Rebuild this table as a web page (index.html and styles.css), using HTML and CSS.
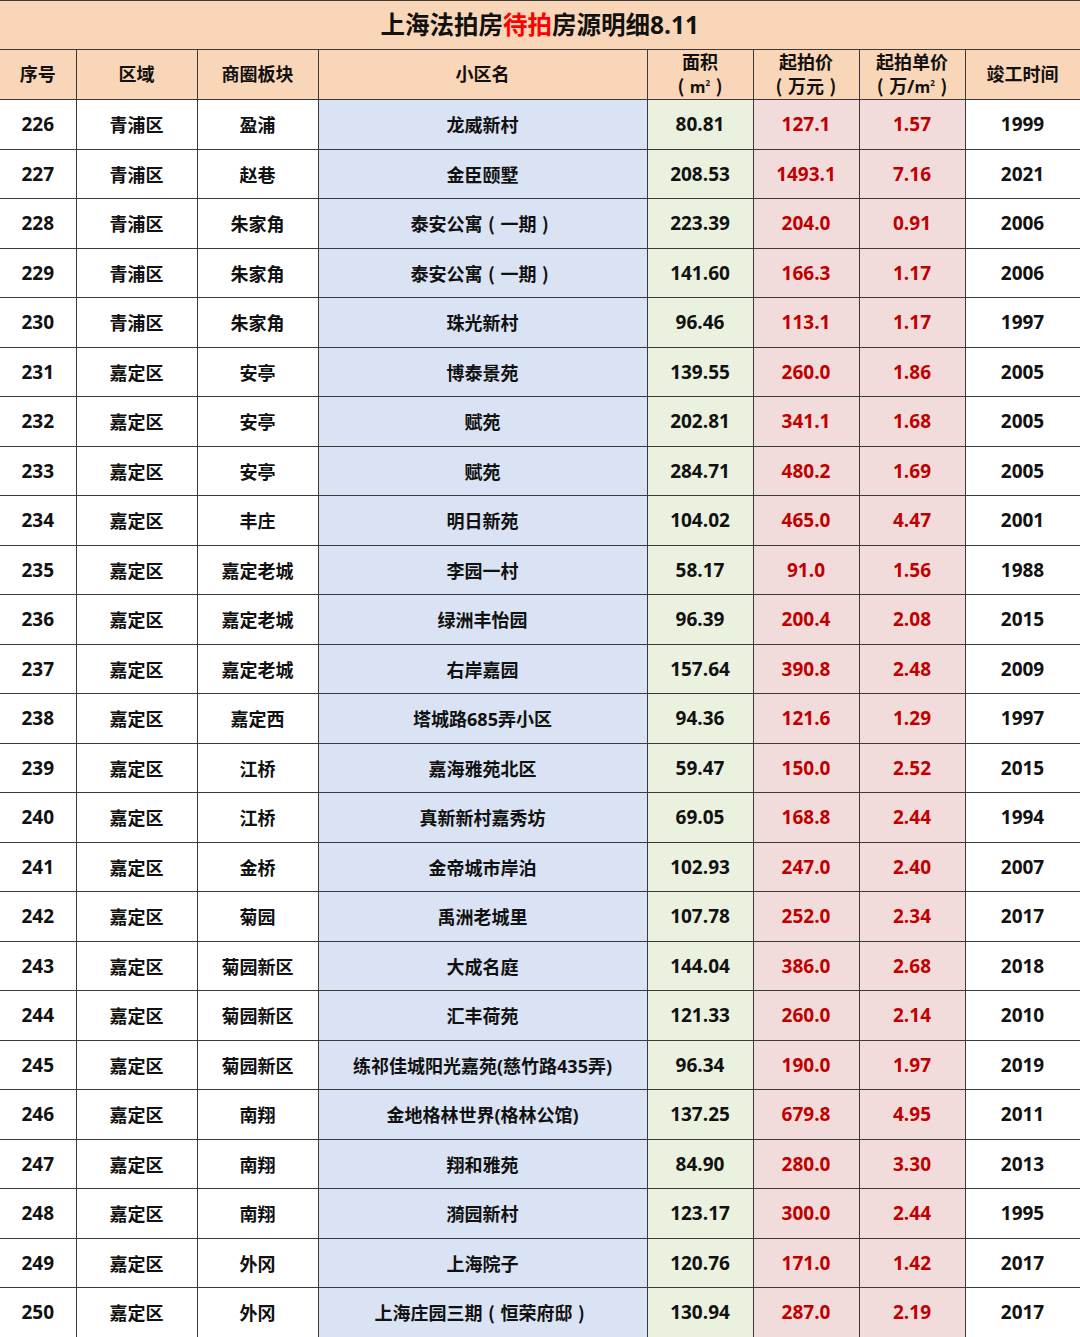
FILE: index.html
```html
<!DOCTYPE html>
<html lang="zh-CN">
<head>
<meta charset="utf-8">
<title>上海法拍房待拍房源明细8.11</title>
<link rel="stylesheet" href="styles.css">
</head>
<body>
<table class="sheet">
  <colgroup>
    <col class="c-no"><col class="c-area"><col class="c-zone"><col class="c-name"><col class="c-size"><col class="c-price"><col class="c-unit"><col class="c-year">
  </colgroup>
  <thead>
    <tr class="title-row"><th colspan="8" class="title">上海法拍房<span class="hot">待拍</span>房源明细8.11</th></tr>
    <tr class="head-row">
      <th>序号</th><th>区域</th><th>商圈板块</th><th>小区名</th>
      <th>面积<br><span class="p">(</span><span class="sq">m<sup>2</sup></span><span class="p">)</span></th>
      <th>起拍价<br><span class="p">(</span>万元<span class="p">)</span></th>
      <th>起拍单价<br><span class="p">(</span>万/<span class="sq">m<sup>2</sup></span><span class="p">)</span></th>
      <th>竣工时间</th>
    </tr>
  </thead>
  <tbody>
    <tr><td>226</td><td>青浦区</td><td>盈浦</td><td class="name">龙威新村</td><td class="size">80.81</td><td class="price">127.1</td><td class="price">1.57</td><td>1999</td></tr>
    <tr><td>227</td><td>青浦区</td><td>赵巷</td><td class="name">金臣颐墅</td><td class="size">208.53</td><td class="price">1493.1</td><td class="price">7.16</td><td>2021</td></tr>
    <tr><td>228</td><td>青浦区</td><td>朱家角</td><td class="name">泰安公寓<span class="p">(</span>一期<span class="p">)</span></td><td class="size">223.39</td><td class="price">204.0</td><td class="price">0.91</td><td>2006</td></tr>
    <tr><td>229</td><td>青浦区</td><td>朱家角</td><td class="name">泰安公寓<span class="p">(</span>一期<span class="p">)</span></td><td class="size">141.60</td><td class="price">166.3</td><td class="price">1.17</td><td>2006</td></tr>
    <tr><td>230</td><td>青浦区</td><td>朱家角</td><td class="name">珠光新村</td><td class="size">96.46</td><td class="price">113.1</td><td class="price">1.17</td><td>1997</td></tr>
    <tr><td>231</td><td>嘉定区</td><td>安亭</td><td class="name">博泰景苑</td><td class="size">139.55</td><td class="price">260.0</td><td class="price">1.86</td><td>2005</td></tr>
    <tr><td>232</td><td>嘉定区</td><td>安亭</td><td class="name">赋苑</td><td class="size">202.81</td><td class="price">341.1</td><td class="price">1.68</td><td>2005</td></tr>
    <tr><td>233</td><td>嘉定区</td><td>安亭</td><td class="name">赋苑</td><td class="size">284.71</td><td class="price">480.2</td><td class="price">1.69</td><td>2005</td></tr>
    <tr><td>234</td><td>嘉定区</td><td>丰庄</td><td class="name">明日新苑</td><td class="size">104.02</td><td class="price">465.0</td><td class="price">4.47</td><td>2001</td></tr>
    <tr><td>235</td><td>嘉定区</td><td>嘉定老城</td><td class="name">李园一村</td><td class="size">58.17</td><td class="price">91.0</td><td class="price">1.56</td><td>1988</td></tr>
    <tr><td>236</td><td>嘉定区</td><td>嘉定老城</td><td class="name">绿洲丰怡园</td><td class="size">96.39</td><td class="price">200.4</td><td class="price">2.08</td><td>2015</td></tr>
    <tr><td>237</td><td>嘉定区</td><td>嘉定老城</td><td class="name">右岸嘉园</td><td class="size">157.64</td><td class="price">390.8</td><td class="price">2.48</td><td>2009</td></tr>
    <tr><td>238</td><td>嘉定区</td><td>嘉定西</td><td class="name">塔城路685弄小区</td><td class="size">94.36</td><td class="price">121.6</td><td class="price">1.29</td><td>1997</td></tr>
    <tr><td>239</td><td>嘉定区</td><td>江桥</td><td class="name">嘉海雅苑北区</td><td class="size">59.47</td><td class="price">150.0</td><td class="price">2.52</td><td>2015</td></tr>
    <tr><td>240</td><td>嘉定区</td><td>江桥</td><td class="name">真新新村嘉秀坊</td><td class="size">69.05</td><td class="price">168.8</td><td class="price">2.44</td><td>1994</td></tr>
    <tr><td>241</td><td>嘉定区</td><td>金桥</td><td class="name">金帝城市岸泊</td><td class="size">102.93</td><td class="price">247.0</td><td class="price">2.40</td><td>2007</td></tr>
    <tr><td>242</td><td>嘉定区</td><td>菊园</td><td class="name">禹洲老城里</td><td class="size">107.78</td><td class="price">252.0</td><td class="price">2.34</td><td>2017</td></tr>
    <tr><td>243</td><td>嘉定区</td><td>菊园新区</td><td class="name">大成名庭</td><td class="size">144.04</td><td class="price">386.0</td><td class="price">2.68</td><td>2018</td></tr>
    <tr><td>244</td><td>嘉定区</td><td>菊园新区</td><td class="name">汇丰荷苑</td><td class="size">121.33</td><td class="price">260.0</td><td class="price">2.14</td><td>2010</td></tr>
    <tr><td>245</td><td>嘉定区</td><td>菊园新区</td><td class="name">练祁佳城阳光嘉苑(慈竹路435弄)</td><td class="size">96.34</td><td class="price">190.0</td><td class="price">1.97</td><td>2019</td></tr>
    <tr><td>246</td><td>嘉定区</td><td>南翔</td><td class="name">金地格林世界(格林公馆)</td><td class="size">137.25</td><td class="price">679.8</td><td class="price">4.95</td><td>2011</td></tr>
    <tr><td>247</td><td>嘉定区</td><td>南翔</td><td class="name">翔和雅苑</td><td class="size">84.90</td><td class="price">280.0</td><td class="price">3.30</td><td>2013</td></tr>
    <tr><td>248</td><td>嘉定区</td><td>南翔</td><td class="name">漪园新村</td><td class="size">123.17</td><td class="price">300.0</td><td class="price">2.44</td><td>1995</td></tr>
    <tr><td>249</td><td>嘉定区</td><td>外冈</td><td class="name">上海院子</td><td class="size">120.76</td><td class="price">171.0</td><td class="price">1.42</td><td>2017</td></tr>
    <tr><td>250</td><td>嘉定区</td><td>外冈</td><td class="name">上海庄园三期<span class="p">(</span>恒荣府邸<span class="p">)</span></td><td class="size">130.94</td><td class="price">287.0</td><td class="price">2.19</td><td>2017</td></tr>
  </tbody>
</table>
</body>
</html>
```
FILE: styles.css
```css
html, body {
  margin: 0;
  padding: 0;
  background: #ffffff;
}
.sheet {
  width: 1080px;
  height: 1337px;
  border-collapse: collapse;
  table-layout: fixed;
  font-family: "Open Sans", "Noto Sans CJK SC", sans-serif;
  font-weight: 700;
  font-size: 19px;
  color: #111111;
}
.c-no { width: 76px; }
.c-area { width: 121px; }
.c-zone { width: 121px; }
.c-name { width: 329px; }
.c-size { width: 106px; }
.c-price { width: 106px; }
.c-unit { width: 106px; }
.c-year { width: 115px; }

.sheet th, .sheet td {
  border: 1px solid #3a3a3a;
  text-align: center;
  vertical-align: middle;
  padding: 0;
}
.sheet th:first-child, .sheet td:first-child { border-left: none; }
.title-row { height: 49px; }
.title {
  background: #fad6b8;
  font-size: 24.5px;
  line-height: 30px;
  border-top: none;
  padding-bottom: 7px;
}
.title .hot { color: #ff0000; }
.head-row { height: 50px; }
.head-row th {
  background: #fad6b8;
  font-size: 18px;
  line-height: 23px;
}
.p {
  display: inline-block;
  width: 1em;
  text-align: center;
  font-family: "Noto Sans CJK SC", sans-serif;
  font-weight: 700;
}
.sq {
  font-family: "Open Sans", sans-serif;
  font-size: 16px;
}
.sq sup {
  font-size: 8px;
  vertical-align: 7px;
  line-height: 0;
}
.sheet tbody tr { height: 49.5px; }
.sheet td { font-size: 19px; }
.sheet td:nth-child(2),
.sheet td:nth-child(3),
.sheet td:nth-child(4) { font-size: 18px; }
.sheet td.name { background: #dae3f3; }
.sheet td.size { background: #ebf1df; }
.sheet td.price { background: #f2dcdb; color: #c00000; }
```
